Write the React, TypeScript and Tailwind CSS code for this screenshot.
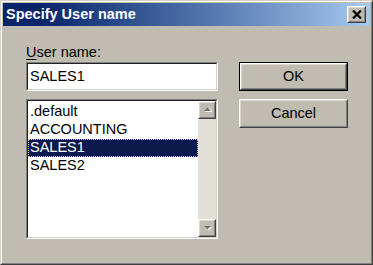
import React from 'react';

const raised = 'border border-t-white border-l-white border-b-[#404040] border-r-[#404040]';
const raisedInner = 'border border-t-[#dcd8d0] border-l-[#dcd8d0] border-b-[#808080] border-r-[#808080]';
const sunken = 'border border-t-[#808080] border-l-[#808080] border-b-white border-r-white';
const sunkenInner = 'border border-t-[#202020] border-l-[#202020] border-b-[#d4d0c8] border-r-[#d4d0c8]';

const ArrowButton: React.FC<{ dir: 'up' | 'down' }> = ({ dir }) => (
  <div className={`${raised} w-[18px] h-[18px]`}>
    <div className={`${raisedInner} w-full h-full bg-[#c0bcb1] flex items-center justify-center`}>
      <svg width="9" height="6" viewBox="0 0 9 6">
        {dir === 'up' ? (
          <>
            <path d="M2 5 L6 1 L10 5 Z" fill="#ffffff" />
            <path d="M1 4 L4.5 0.5 L8 4 Z" fill="#707070" />
          </>
        ) : (
          <>
            <path d="M2 2 L9 2 L5.5 5.5 Z" fill="#ffffff" />
            <path d="M1 1 L8 1 L4.5 4.5 Z" fill="#707070" />
          </>
        )}
      </svg>
    </div>
  </div>
);

const Button: React.FC<{ label: string; isDefault?: boolean }> = ({ label, isDefault }) => (
  <div className={`w-[109px] h-[29px] ${isDefault ? 'border border-black' : ''}`}>
    <div className={`${raised} w-full h-full`}>
      <div className={`${raisedInner} w-full h-full flex items-center justify-center text-[14.5px] text-black`}>
        {label}
      </div>
    </div>
  </div>
);

const items = ['.default', 'ACCOUNTING', 'SALES1', 'SALES2'];

export default function App() {
  return (
    <div
      className="w-[373px] h-[265px] bg-[#c0bcb1] border border-t-[#d4d0c8] border-l-[#d4d0c8] border-b-[#404040] border-r-[#404040]"
      style={{ fontFamily: '"Liberation Sans", Arial, sans-serif' }}
    >
      <div className="w-full h-full border border-t-white border-l-white border-b-[#808080] border-r-[#808080] p-px flex flex-col">
        {/* title bar */}
        <div className="h-[23px] bg-linear-to-r from-[#0a246a] from-10% to-[#a6caf0] flex items-center justify-between pl-[3px] pr-[4px]">
          <span className="text-white font-bold text-[14.5px] leading-none">Specify User name</span>
          <div className={`${raised} w-[19px] h-[17px]`}>
            <div className={`${raisedInner} w-full h-full bg-[#c0bcb1] flex items-center justify-center`}>
              <svg width="10" height="9" viewBox="0 0 10 9">
                <path d="M1 0.5 L9 8.5 M9 0.5 L1 8.5" stroke="#000" strokeWidth="2.2" />
              </svg>
            </div>
          </div>
        </div>

        {/* body */}
        <div className="flex flex-1 pl-[23px] pt-[18px]">
          <div className="w-[192px] flex flex-col">
            <div className="text-[14.5px] leading-[17px] text-black">
              <span className="underline underline-offset-2">U</span>ser name:
            </div>
            <div className={`${sunken} mt-[1px] h-[29px]`}>
              <div className={`${sunkenInner} h-full bg-white flex items-center pl-[2px] text-[14.5px] text-black`}>
                SALES1
              </div>
            </div>
            <div className={`${sunken} mt-[8px] h-[140px]`}>
              <div className={`${sunkenInner} h-full bg-white flex`}>
                <div className="flex-1 pt-[2px] text-[14.5px] text-black">
                  {items.map((it) => (
                    <div
                      key={it}
                      className={`h-[18px] flex items-center pl-[2px] ${
                        it === 'SALES1' ? 'bg-[#0a1a4a] text-white outline-1 outline-dotted outline-[#e8d080] -outline-offset-1' : ''
                      }`}
                    >
                      {it}
                    </div>
                  ))}
                </div>
                <div className="w-[18px] flex flex-col bg-[#e2dfd8]">
                  <ArrowButton dir="up" />
                  <div className="flex-1" />
                  <ArrowButton dir="down" />
                </div>
              </div>
            </div>
          </div>

          <div className="ml-[21px] pt-[18px] flex flex-col gap-[8px]">
            <Button label="OK" isDefault />
            <Button label="Cancel" />
          </div>
        </div>
      </div>
    </div>
  );
}
